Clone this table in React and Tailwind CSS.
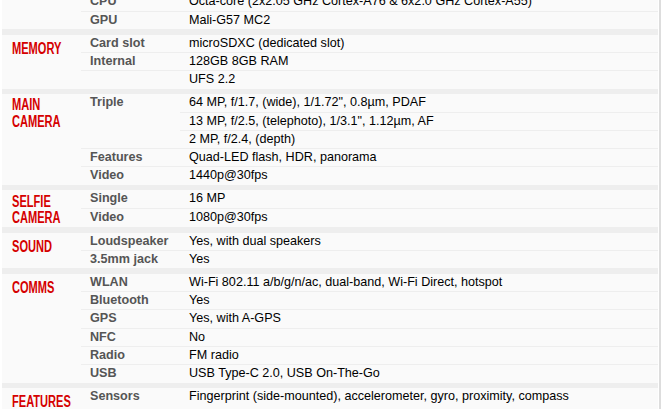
import React from 'react';

// spec sheet data, one entry per section
const sections = [
    {
        title: [],
        rows: [
            { label: 'CPU', values: ['Octa-core (2x2.05 GHz Cortex-A76 & 6x2.0 GHz Cortex-A55)'] },
            { label: 'GPU', values: ['Mali-G57 MC2'] },
        ],
    },
    {
        title: ['MEMORY'],
        rows: [
            { label: 'Card slot', values: ['microSDXC (dedicated slot)'] },
            { label: 'Internal', values: ['128GB 8GB RAM'] },
            { label: '', values: ['UFS 2.2'] },
        ],
    },
    {
        title: ['MAIN', 'CAMERA'],
        rows: [
            {
                label: 'Triple',
                values: [
                    '64 MP, f/1.7, (wide), 1/1.72", 0.8µm, PDAF',
                    '13 MP, f/2.5, (telephoto), 1/3.1", 1.12µm, AF',
                    '2 MP, f/2.4, (depth)',
                ],
            },
            { label: 'Features', values: ['Quad-LED flash, HDR, panorama'] },
            { label: 'Video', values: ['1440p@30fps'] },
        ],
    },
    {
        title: ['SELFIE', 'CAMERA'],
        rows: [
            { label: 'Single', values: ['16 MP'] },
            { label: 'Video', values: ['1080p@30fps'] },
        ],
    },
    {
        title: ['SOUND'],
        rows: [
            { label: 'Loudspeaker', values: ['Yes, with dual speakers'] },
            { label: '3.5mm jack', values: ['Yes'] },
        ],
    },
    {
        title: ['COMMS'],
        rows: [
            { label: 'WLAN', values: ['Wi-Fi 802.11 a/b/g/n/ac, dual-band, Wi-Fi Direct, hotspot'] },
            { label: 'Bluetooth', values: ['Yes'] },
            { label: 'GPS', values: ['Yes, with A-GPS'] },
            { label: 'NFC', values: ['No'] },
            { label: 'Radio', values: ['FM radio'] },
            { label: 'USB', values: ['USB Type-C 2.0, USB On-The-Go'] },
        ],
    },
    {
        title: ['FEATURES'],
        rows: [
            { label: 'Sensors', values: ['Fingerprint (side-mounted), accelerometer, gyro, proximity, compass'] },
        ],
    },
];

const SectionTitle = ({ lines }) => {
    if (!lines.length) return <div className="w-[79px] shrink-0" />;
    const pad = lines.length > 1 ? 'pt-[3.2px]' : 'pt-[6px]';
    return (
        <div className={`w-[79px] shrink-0 pl-[10px] ${pad}`}>
            {lines.map((line) => (
                <div key={line} className="h-[16.7px] leading-[16.7px]">
                    <span className="inline-block origin-left scale-x-[0.66] text-[16.8px] font-bold text-[#d50000] whitespace-nowrap">
                        {line}
                    </span>
                </div>
            ))}
        </div>
    );
};

const Row = ({ row, last }) => (
    <div className={`flex ${last ? '' : 'border-b border-[#eeeeee]'}`}>
        <div className="w-[99px] shrink-0 pl-[9px] h-[17.33px] font-bold text-[#555] leading-[17.33px] whitespace-nowrap">
            {row.label}
        </div>
        <div className="flex-1 flex flex-col">
            {row.values.map((v, i) => (
                <div
                    key={i}
                    className={`pl-[9px] text-black leading-[17.33px] whitespace-nowrap ${i < row.values.length - 1 ? 'h-[18.33px] border-b border-[#eeeeee]' : 'h-[17.33px]'}`}
                >
                    {v}
                </div>
            ))}
        </div>
    </div>
);

const App = () => {
    return (
        <div className="w-[661px] h-[409px] overflow-hidden bg-white flex" style={{ fontFamily: '"Liberation Sans", Arial, sans-serif' }}>
            <div className="w-[2px] shrink-0" />
            <div className="flex-1 flex flex-col bg-[#fafafa] text-[12.6px] mt-[-6.67px]">
                {sections.map((s, idx) => (
                    <React.Fragment key={idx}>
                        {idx > 0 && <div className="h-[5.6px] shrink-0 bg-[#eeeeee]" />}
                        <div className="flex">
                            <SectionTitle lines={s.title} />
                            <div className="flex-1 flex flex-col">
                                {s.rows.map((r, i) => (
                                    <Row key={i} row={r} last={i === s.rows.length - 1} />
                                ))}
                            </div>
                        </div>
                    </React.Fragment>
                ))}
            </div>
            <div className="w-[1px] shrink-0" />
            <div className="w-[2px] shrink-0 bg-[#dddddd]" />
        </div>
    );
};

export default App;
